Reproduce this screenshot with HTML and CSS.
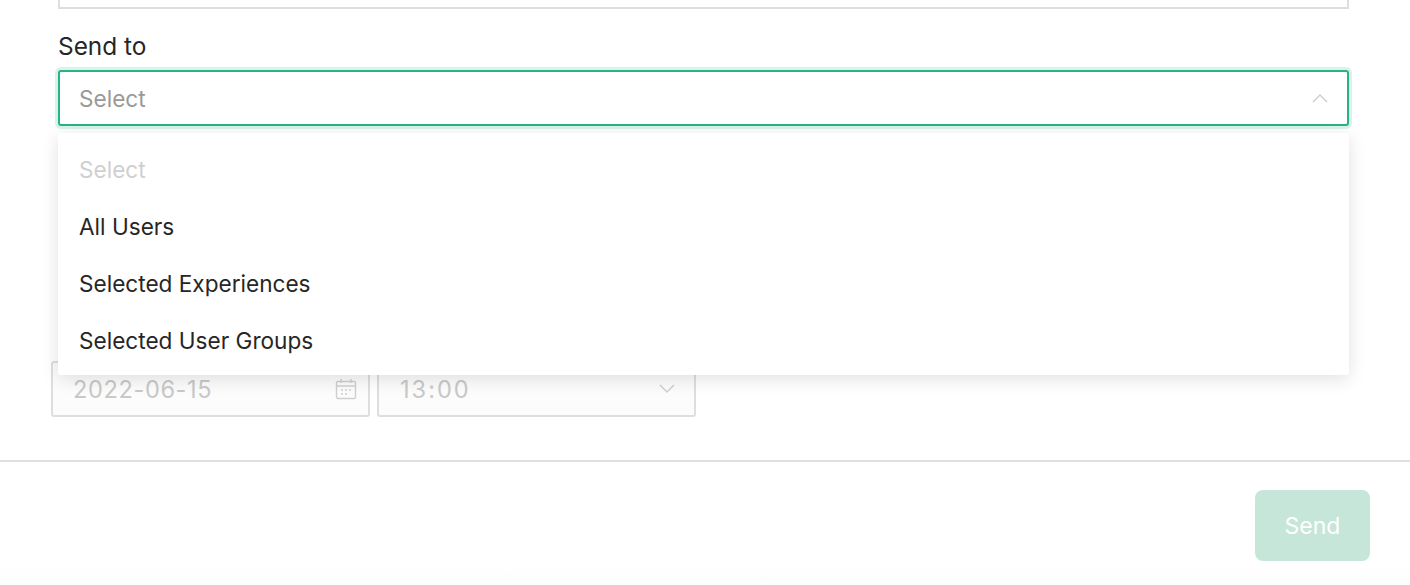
FILE: index.html
```html
<!DOCTYPE html>
<html>
<head>
    <title>Send notification</title>
    <link rel="stylesheet" href="styles.css">
</head>
<body>
    <div class="form">
        <div class="prev-input"></div>
        <label class="field-label">Send to</label>
        <div class="select-wrap">
            <div class="select">
                <span class="placeholder">Select</span>
                <svg class="arrow" width="16" height="10" viewBox="0 0 16 10"><path d="M1 9 L8 2 L15 9" fill="none" stroke="#cfcfcf" stroke-width="1.5"/></svg>
            </div>
            <ul class="dropdown">
                <li class="option muted">Select</li>
                <li class="option">All Users</li>
                <li class="option">Selected Experiences</li>
                <li class="option">Selected User Groups</li>
            </ul>
        </div>
        <div class="schedule">
            <div class="picker date">
                <span>2022-06-15</span>
                <svg class="cal" width="22" height="22" viewBox="0 0 22 22" fill="none" stroke="#cfcfcf" stroke-width="1.4">
                    <rect x="1.5" y="3.5" width="19" height="17" rx="1.5"/>
                    <path d="M1.5 8 H20.5 M6 1 V5 M16 1 V5"/>
                    <path d="M6 12 H8 M10 12 H12 M14 12 H16 M6 16 H8 M10 16 H12"/>
                </svg>
            </div>
            <div class="picker time">
                <span>13:00</span>
                <svg class="arrow" width="16" height="10" viewBox="0 0 16 10"><path d="M1 1 L8 8 L15 1" fill="none" stroke="#cfcfcf" stroke-width="1.5"/></svg>
            </div>
        </div>
    </div>
    <div class="footer">
        <button class="send" disabled>Send</button>
    </div>
</body>
</html>
```

FILE: styles.css
```css
* {
    box-sizing: border-box;
    margin: 0;
    padding: 0;
    font-family: Inter, "Liberation Sans", sans-serif;
}

html,
body {
    height: 585px;
    overflow: hidden;
    background-color: #fff;
}

.form {
    padding: 0 61px 0 58px;
}

.prev-input {
    height: 9px;
    border: 2px solid #dedede;
    border-top: none;
}

.field-label {
    display: block;
    margin-top: 22px;
    height: 39px;
    line-height: 30px;
    font-size: 24.4px;
    color: #262626;
}

.select-wrap {
    position: relative;
}

.select {
    display: flex;
    align-items: center;
    justify-content: space-between;
    height: 56px;
    padding: 0 19px;
    background-color: #fff;
    border: 2px solid #25b585;
    border-radius: 3px;
    box-shadow: 0 0 0 3px #dcf1e9;
}

.placeholder {
    font-size: 22.6px;
    color: #999;
}

.dropdown {
    position: absolute;
    top: 63px;
    left: 0;
    right: 0;
    padding: 8px 0 6px;
    list-style: none;
    background-color: #fff;
    border-radius: 3px;
    box-shadow: 0 4px 18px rgba(0, 0, 0, 0.12);
    z-index: 2;
}

.option {
    height: 57px;
    line-height: 57px;
    padding-left: 21px;
    font-size: 22.6px;
    color: #262626;
}

.option.muted {
    color: #cfcfcf;
}

.schedule {
    display: flex;
    gap: 7px;
    margin: 235px 0 0 -7px;
}

.picker {
    display: flex;
    align-items: center;
    justify-content: space-between;
    width: 319px;
    height: 56px;
    padding: 0 19px 0 20px;
    background-color: #fcfcfc;
    border: 2px solid #dedede;
    border-radius: 3px;
    font-size: 23.6px;
    letter-spacing: 0.6px;
    color: #c9c9c9;
}

.picker.date {
    padding-right: 11px;
}

.picker.time {
    padding-left: 21px;
    letter-spacing: 2px;
}

.footer {
    display: flex;
    justify-content: flex-end;
    height: 141px;
    margin-top: 43px;
    padding: 28px 40px 0 0;
    border-top: 2px solid #e0e0e0;
    background: linear-gradient(#fff 105px, #fafafa);
}

.send {
    width: 115px;
    height: 71px;
    font-size: 23px;
    color: #fff;
    background-color: #c6e6d9;
    border: none;
    border-radius: 8px;
}
```
